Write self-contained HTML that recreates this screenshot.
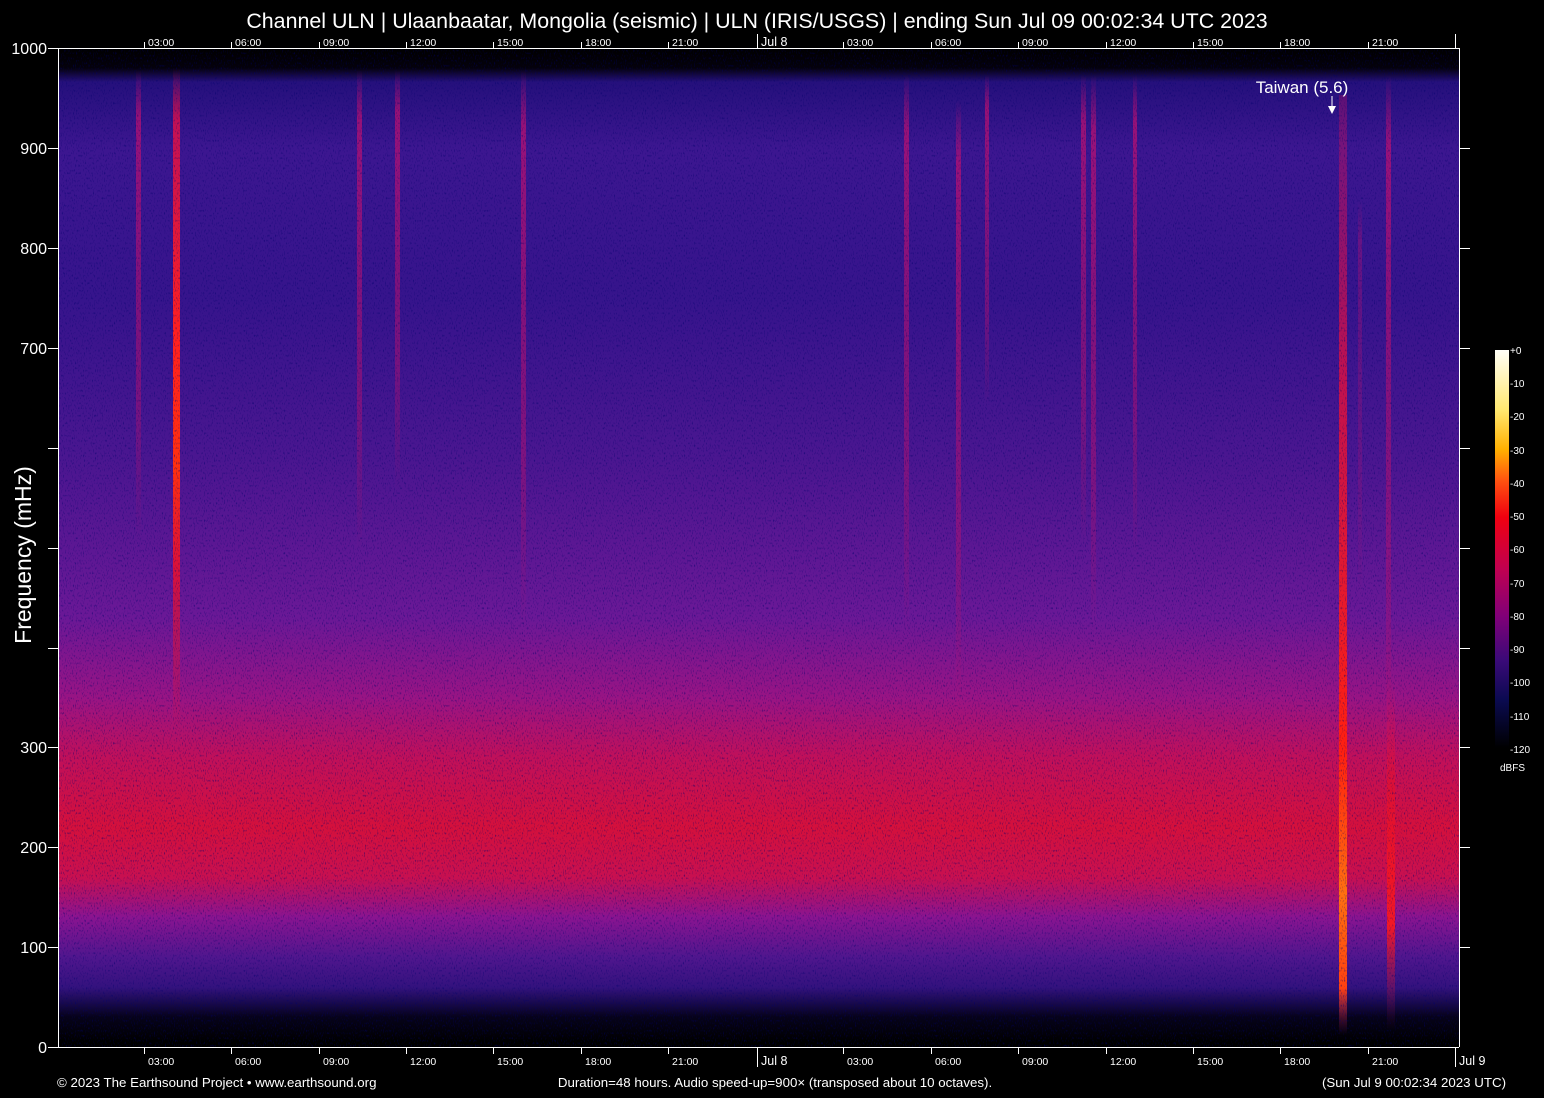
<!DOCTYPE html>
<html><head><meta charset="utf-8"><style>
html,body{margin:0;padding:0;background:#000;width:1544px;height:1098px;overflow:hidden}
svg{display:block}
text{font-family:"Liberation Sans",sans-serif;fill:#fff}
</style></head><body>
<svg width="1544" height="1098" viewBox="0 0 1544 1098" xmlns="http://www.w3.org/2000/svg">
<defs>
<linearGradient id="bg" x1="0" y1="48" x2="0" y2="1047" gradientUnits="userSpaceOnUse">
<stop offset="0" stop-color="#000"/>
<stop offset="0.02" stop-color="#04010c"/>
<stop offset="0.034" stop-color="#25107c"/>
<stop offset="0.1" stop-color="#3c1690"/>
<stop offset="0.25" stop-color="#36148c"/>
<stop offset="0.41" stop-color="#4a1690"/>
<stop offset="0.57" stop-color="#6a1896"/>
<stop offset="0.65" stop-color="#981484"/>
<stop offset="0.71" stop-color="#c0105a"/>
<stop offset="0.78" stop-color="#d4103c"/>
<stop offset="0.83" stop-color="#c81050"/>
<stop offset="0.87" stop-color="#8a1490"/>
<stop offset="0.91" stop-color="#50168e"/>
<stop offset="0.94" stop-color="#34127e"/>
<stop offset="0.955" stop-color="#1a0a50"/>
<stop offset="0.97" stop-color="#06021a"/>
<stop offset="0.995" stop-color="#000"/>
</linearGradient>
<linearGradient id="st" x1="0" y1="0" x2="0" y2="1">
<stop offset="0" stop-color="#c01070" stop-opacity="0"/>
<stop offset="0.1" stop-color="#c01070" stop-opacity="0.7"/>
<stop offset="0.7" stop-color="#b01070" stop-opacity="0.5"/>
<stop offset="1" stop-color="#b01070" stop-opacity="0"/>
</linearGradient>
<linearGradient id="stb" x1="0" y1="0" x2="0" y2="1">
<stop offset="0" stop-color="#e01040" stop-opacity="0"/>
<stop offset="0.08" stop-color="#d01050" stop-opacity="0.9"/>
<stop offset="0.4" stop-color="#ff2020"/>
<stop offset="0.6" stop-color="#ff3010"/>
<stop offset="0.75" stop-color="#e81030" stop-opacity="0.9"/>
<stop offset="1" stop-color="#e81030" stop-opacity="0"/>
</linearGradient>
<linearGradient id="tw" x1="0" y1="0" x2="0" y2="1">
<stop offset="0" stop-color="#d01060" stop-opacity="0.3"/>
<stop offset="0.3" stop-color="#e01040" stop-opacity="0.8"/>
<stop offset="0.7" stop-color="#ff2010"/>
<stop offset="0.85" stop-color="#ff7010"/>
<stop offset="0.95" stop-color="#ff4010"/>
<stop offset="1" stop-color="#801060" stop-opacity="0"/>
</linearGradient>
<linearGradient id="tw2" x1="0" y1="0" x2="0" y2="1">
<stop offset="0" stop-color="#d01060" stop-opacity="0"/>
<stop offset="0.3" stop-color="#e01030" stop-opacity="0.8"/>
<stop offset="0.7" stop-color="#ff1818" stop-opacity="0.9"/>
<stop offset="1" stop-color="#801060" stop-opacity="0"/>
</linearGradient>
<linearGradient id="cb" x1="0" y1="0" x2="0" y2="1">
<stop offset="0" stop-color="#fffff8"/>
<stop offset="0.15" stop-color="#ffe870"/>
<stop offset="0.25" stop-color="#ffb000"/>
<stop offset="0.33" stop-color="#ff5010"/>
<stop offset="0.42" stop-color="#f00010"/>
<stop offset="0.55" stop-color="#c00050"/>
<stop offset="0.67" stop-color="#800078"/>
<stop offset="0.78" stop-color="#3a0a78"/>
<stop offset="0.88" stop-color="#0a0a50"/>
<stop offset="1" stop-color="#000"/>
</linearGradient>
<filter id="nz" x="0" y="0" width="100%" height="100%">
<feTurbulence type="fractalNoise" baseFrequency="0.9 0.4" numOctaves="1" seed="3"/>
<feColorMatrix values="0 0 0 0 0  0 0 0 0 0  0 0 0 0 0.15  0 0 0 -2 0.9"/>
<feComposite in2="SourceGraphic" operator="in"/>
</filter>
</defs>
<text x="757" y="28" font-size="21.4" text-anchor="middle">Channel ULN | Ulaanbaatar, Mongolia (seismic) | ULN (IRIS/USGS) | ending Sun Jul 09 00:02:34 UTC 2023</text>
<rect x="58" y="48" width="1401" height="999" fill="url(#bg)"/>
<g fill="url(#st)">
<rect x="136" y="70" width="5" height="470"/>
<rect x="357" y="70" width="5" height="480"/>
<rect x="395" y="70" width="5" height="420"/>
<rect x="521" y="70" width="5" height="560"/>
<rect x="904" y="75" width="5" height="560"/>
<rect x="956" y="100" width="5" height="620"/>
<rect x="985" y="75" width="4" height="330"/>
<rect x="1081" y="75" width="5" height="470"/>
<rect x="1091" y="75" width="5" height="560"/>
<rect x="1133" y="75" width="4" height="480"/>
<rect x="1386" y="75" width="5" height="700"/>
<rect x="1358" y="200" width="4" height="400" opacity="0.5"/>
</g>
<rect x="173" y="68" width="7" height="665" fill="url(#stb)"/>
<rect x="1339" y="95" width="8" height="940" fill="url(#tw)"/>
<rect x="1387" y="680" width="8" height="350" fill="url(#tw2)"/>
<rect x="58" y="48" width="1401" height="999" fill="#fff" filter="url(#nz)"/>
<text x="1302" y="93" font-size="17" text-anchor="middle">Taiwan (5.6)</text>
<line x1="1332" y1="96" x2="1332" y2="110" stroke="#fff"/>
<path d="M1328 106 L1336 106 L1332 114 Z" fill="#fff"/>
<g stroke="#fff" stroke-width="1" fill="none">
<line x1="58" y1="48.5" x2="1459" y2="48.5"/>
<line x1="58" y1="1047.5" x2="1459" y2="1047.5"/>
<line x1="58.5" y1="48" x2="58.5" y2="1047"/>
<line x1="1459.5" y1="48" x2="1459.5" y2="1047"/>
</g>
<g stroke="#fff">
<path d="M48 48.5h10M48 148.5h10M48 248.5h10M48 348.5h10M48 448.5h10M48 548.5h10M48 648.5h10M48 747.5h10M48 847.5h10M48 947.5h10M48 1047.5h10"/>
<path d="M1459 148.5h11M1459 248.5h11M1459 348.5h11M1459 448.5h11M1459 548.5h11M1459 648.5h11M1459 747.5h11M1459 847.5h11M1459 947.5h11"/>
<path d="M144.5 42v6M231.5 42v6M319.5 42v6M406.5 42v6M493.5 42v6M581.5 42v6M668.5 42v6M757.5 34v14M843.5 42v6M931.5 42v6M1018.5 42v6M1106.5 42v6M1193.5 42v6M1280.5 42v6M1368.5 42v6M1455.5 34v14"/>
<path d="M144.5 1047v7M231.5 1047v7M319.5 1047v7M406.5 1047v7M493.5 1047v7M581.5 1047v7M668.5 1047v7M757.5 1047v20M843.5 1047v7M931.5 1047v7M1018.5 1047v7M1106.5 1047v7M1193.5 1047v7M1280.5 1047v7M1368.5 1047v7M1455.5 1047v20"/>
</g>
<g font-size="16" text-anchor="end">
<text x="47" y="54">1000</text><text x="47" y="154">900</text><text x="47" y="254">800</text><text x="47" y="354">700</text>
<text x="47" y="753">300</text><text x="47" y="853">200</text><text x="47" y="953">100</text><text x="47" y="1053">0</text>
</g>
<text transform="translate(31,555) rotate(-90)" font-size="23" text-anchor="middle">Frequency (mHz)</text>
<g font-size="10.5">
<text x="148" y="46">03:00</text><text x="235" y="46">06:00</text><text x="323" y="46">09:00</text><text x="410" y="46">12:00</text><text x="497" y="46">15:00</text><text x="585" y="46">18:00</text><text x="672" y="46">21:00</text><text x="761" y="46" font-size="12.5">Jul  8</text><text x="847" y="46">03:00</text><text x="935" y="46">06:00</text><text x="1022" y="46">09:00</text><text x="1110" y="46">12:00</text><text x="1197" y="46">15:00</text><text x="1284" y="46">18:00</text><text x="1372" y="46">21:00</text>
<text x="148" y="1065">03:00</text><text x="235" y="1065">06:00</text><text x="323" y="1065">09:00</text><text x="410" y="1065">12:00</text><text x="497" y="1065">15:00</text><text x="585" y="1065">18:00</text><text x="672" y="1065">21:00</text><text x="761" y="1065" font-size="12.5">Jul  8</text><text x="847" y="1065">03:00</text><text x="935" y="1065">06:00</text><text x="1022" y="1065">09:00</text><text x="1110" y="1065">12:00</text><text x="1197" y="1065">15:00</text><text x="1284" y="1065">18:00</text><text x="1372" y="1065">21:00</text><text x="1459" y="1065" font-size="12.5">Jul  9</text>
</g>
<rect x="1495" y="350" width="14" height="398" fill="url(#cb)"/>
<g font-size="10" style="fill:#ccc">
<text x="1510" y="354">+0</text><text x="1510" y="387">-10</text><text x="1510" y="420">-20</text><text x="1510" y="454">-30</text><text x="1510" y="487">-40</text><text x="1510" y="520">-50</text><text x="1510" y="553">-60</text><text x="1510" y="587">-70</text><text x="1510" y="620">-80</text><text x="1510" y="653">-90</text><text x="1510" y="686">-100</text><text x="1510" y="720">-110</text><text x="1510" y="753">-120</text><text x="1500" y="771">dBFS</text>
</g>
<g font-size="13.3">
<text x="57" y="1087">© 2023 The Earthsound Project • www.earthsound.org</text>
<text x="775" y="1087" text-anchor="middle">Duration=48 hours. Audio speed-up=900× (transposed about 10 octaves).</text>
<text x="1506" y="1087" text-anchor="end">(Sun Jul  9 00:02:34 2023 UTC)</text>
</g>
</svg>
</body></html>
